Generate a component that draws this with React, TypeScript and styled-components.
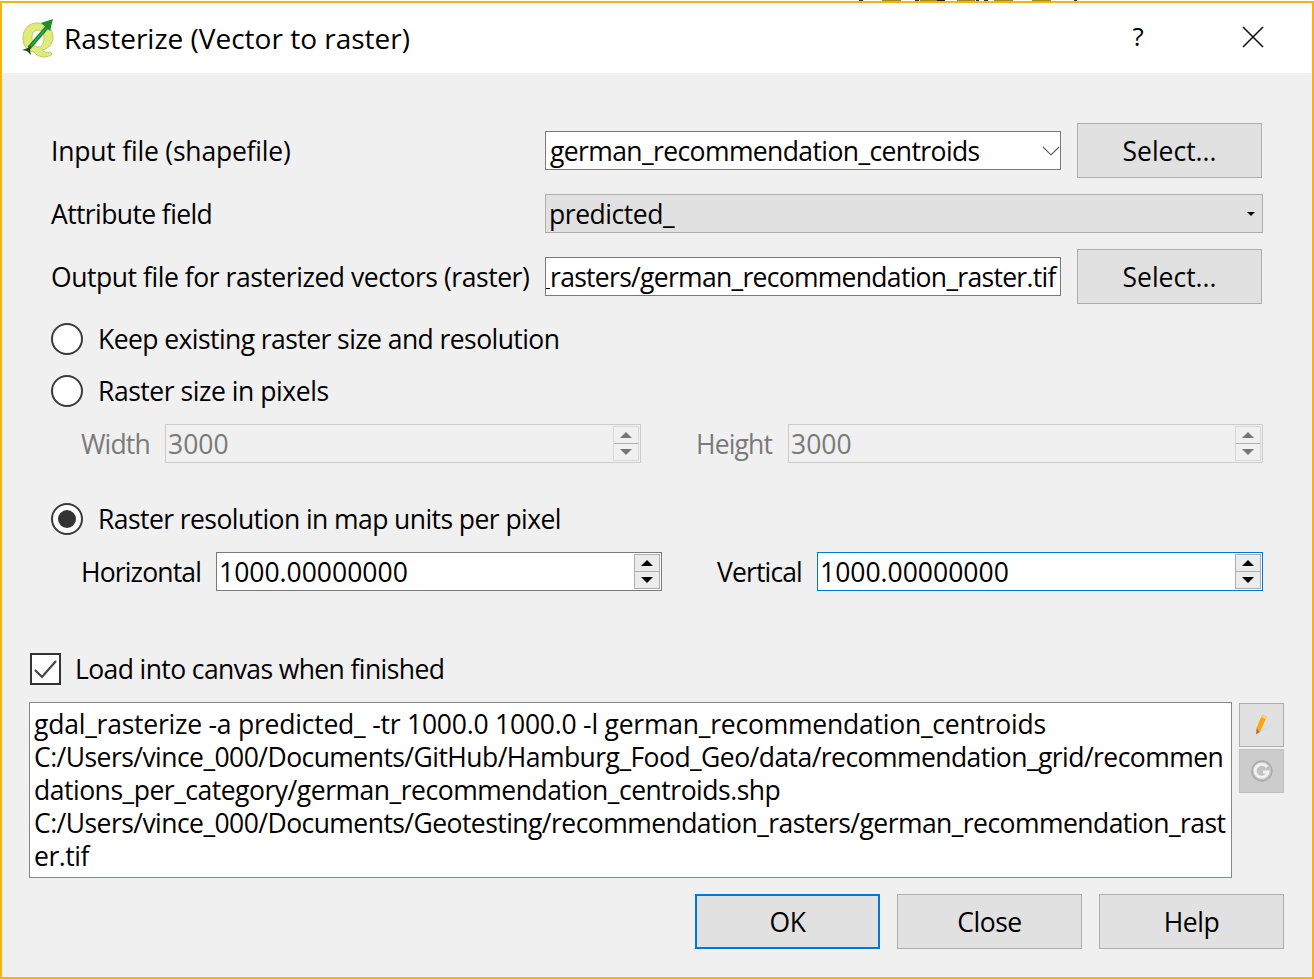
import React from 'react';
import styled, { createGlobalStyle, css } from 'styled-components';

const GlobalStyle = createGlobalStyle`
  html, body {
    margin: 0;
    padding: 0;
    background: #fff;
  }
  body {
    font-family: "Open Sans", "Liberation Sans", sans-serif;
    font-size: 26.5px;
    letter-spacing: -0.45px;
    color: #000;
  }
`;

const QgisIcon = () => (
  <svg width="34" height="40" viewBox="0 0 34 40" fill="none">
    <path
      fillRule="evenodd"
      d="M15 5C7 5 1 11 1 20c0 8 4 13 11 14 2 3 6 5 10 5 3 0 6-1 8-3l-2-2c-3 1-6 0-8-2 7-1 11-7 11-13C31 11 24 5 15 5Zm1 7c4 0 6 3 6 8 0 5-2 9-6 9-4 0-6-4-6-9 0-5 2-8 6-8Z"
      fill="#e0ec78"
      stroke="#bcc868"
      strokeWidth="1"
    />
    <path d="M7 30 26 8" stroke="#17792a" strokeWidth="4" />
    <path d="M7 30 26 8" stroke="#35b03a" strokeWidth="1.6" />
    <path d="M31 1 19 5l9 8Z" fill="#1d8f2c" />
    <path d="M0 32l6-2 3-3-1 5 1 5-4-4Z" fill="#27402a" />
  </svg>
);

const CloseIcon = () => (
  <svg width="22" height="22" viewBox="0 0 22 22">
    <path d="M1 1 21 21M21 1 1 21" stroke="#111" strokeWidth="1.6" />
  </svg>
);

const ChevronIcon = () => (
  <svg width="18" height="10" viewBox="0 0 18 10" fill="none">
    <path d="M1 1l8 8 8-8" stroke="#666" strokeWidth="1.2" />
  </svg>
);

const PencilIcon = () => (
  <svg width="24" height="24" viewBox="0 0 24 24" fill="none">
    <path d="M9 20 23 13 21 10 11 17Z" fill="#dcdce4" />
    <path d="M6.500 15 12 2l5 1.500L10 19Z" fill="#f7a80f" />
    <path d="M12 2l5 1.500-1 2.500-5-2Z" fill="#f9d27a" />
    <path d="M6.500 15 10 19l-4 2.500Z" fill="#b5714a" />
  </svg>
);

const RefreshIcon = () => (
  <svg width="22" height="22" viewBox="0 0 22 22" fill="none">
    <circle cx="11" cy="11" r="10" fill="#c2c2c2" stroke="#ababab" strokeWidth="1.4" />
    <path d="M16 7a6.5 6.5 0 1 0 1 5h-5" stroke="#f2f2f2" strokeWidth="3" />
  </svg>
);

// bits of the window behind, peeking out above the frame
const behindBits: [number, number, string][] = [
  [859, 4, '#333'], [882, 19, '#a08a20'], [915, 4, '#333'], [920, 17, '#a08a20'],
  [937, 8, '#222'], [957, 18, '#a08a20'], [976, 3, '#333'], [984, 4, '#333'],
  [994, 19, '#a08a20'], [1032, 19, '#a08a20'], [1074, 3, '#333'],
];

const BehindStrip = styled.svg`
  display: block;
  flex: none;
`;

const Page = styled.div`
  width: 1314px;
  height: 979px;
  overflow: hidden;
`;

const Window = styled.div`
  height: 978px;
  box-sizing: border-box;
  border: 2px solid #f4b40c;
  background: #f0f0f0;
  display: flex;
  flex-direction: column;
`;

const TitleBar = styled.div`
  height: 70px;
  flex: none;
  background: #fff;
  display: flex;
  align-items: center;
  padding-left: 20px;
`;

const Title = styled.div`
  font-size: 28px;
  letter-spacing: 0;
  margin-left: 8px;
  flex: 1;
  padding-bottom: 1px;
`;

const HelpMark = styled.div`
  font-size: 26px;
  width: 20px;
  text-align: center;
  margin-right: 94px;
  padding-bottom: 4px;
`;

const CloseBox = styled.div`
  display: flex;
  margin-right: 48px;
  padding-bottom: 2px;
`;

const Body = styled.div`
  flex: 1;
  display: flex;
  flex-direction: column;
  padding: 50px 28px 0 27px;
`;

const Form = styled.div`
  display: flex;
  flex-direction: column;
  padding-left: 22px;
  padding-right: 22px;
`;

const FormRow = styled.div<{ $top?: number }>`
  display: grid;
  grid-template-columns: 494px 516px 185px;
  align-items: center;
  margin-top: ${p => p.$top ?? 0}px;
`;

const WideRow = styled(FormRow)`
  grid-template-columns: 494px 718px;
`;

const FieldLabel = styled.div<{ $spacing?: number }>`
  white-space: nowrap;
  letter-spacing: ${p => p.$spacing ?? -0.45}px;
`;

const boxBase = css`
  height: 39px;
  box-sizing: border-box;
  display: flex;
  align-items: center;
  white-space: nowrap;
  overflow: hidden;
`;

const Combo = styled.div`
  ${boxBase}
  background: #fff;
  border: 1px solid #7a7a7a;
  padding: 0 0 0 4px;
  justify-content: space-between;
  letter-spacing: -0.6px;
`;

const DisabledCombo = styled.div`
  ${boxBase}
  background: #e1e1e1;
  border: 1px solid #adadad;
  padding: 0 7px 0 3px;
  justify-content: space-between;
`;

const TinyArrow = styled.span`
  width: 0;
  height: 0;
  border-left: 4px solid transparent;
  border-right: 4px solid transparent;
  border-top: 4px solid #000;
`;

const TextField = styled.div`
  ${boxBase}
  background: #fff;
  border: 1px solid #7a7a7a;
  letter-spacing: -0.7px;
`;

const ClippedUnderscore = styled.span`
  width: 4px;
  height: 1px;
  flex: none;
  align-self: flex-end;
  margin-bottom: 6px;
  background: #000;
`;

const PushButton = styled.button<{ $focused?: boolean }>`
  font: inherit;
  letter-spacing: inherit;
  color: #000;
  height: 55px;
  width: 185px;
  padding: 0;
  background: #e1e1e1;
  border: ${p => (p.$focused ? '2px solid #0078d7' : '1px solid #adadad')};
  box-sizing: border-box;
`;

const SelectButton = styled(PushButton)`
  margin-left: 16px;
  letter-spacing: 0;
`;

const RadioRow = styled.div<{ $top: number }>`
  display: flex;
  align-items: center;
  gap: 15px;
  height: 32px;
  margin-top: ${p => p.$top}px;
`;

const OptionText = styled.span<{ $spacing?: number }>`
  white-space: nowrap;
  letter-spacing: ${p => p.$spacing ?? -0.57}px;
`;

const RadioMark = styled.span<{ $on?: boolean }>`
  width: 32px;
  height: 32px;
  box-sizing: border-box;
  border-radius: 50%;
  border: 2px solid #3a3a3a;
  background: #fff;
  display: flex;
  align-items: center;
  justify-content: center;

  &::after {
    content: '';
    display: ${p => (p.$on ? 'block' : 'none')};
    width: 18px;
    height: 18px;
    border-radius: 50%;
    background: #333;
  }
`;

const SpinRow = styled.div<{ $left: number; $gap: number }>`
  display: grid;
  grid-template-columns: ${p => p.$left}px 1fr;
  column-gap: ${p => p.$gap}px;
  margin-top: 17px;
  padding-left: 30px;
  margin-right: -1px;
`;

const SpinGroup = styled.div<{ $disabled?: boolean }>`
  display: flex;
  align-items: center;
  color: ${p => (p.$disabled ? '#7a7a7a' : '#000')};
`;

const SpinLabel = styled.div<{ $width: number }>`
  width: ${p => p.$width}px;
  flex: none;
  white-space: nowrap;
  letter-spacing: -0.85px;
`;

const SpinBox = styled.div<{ $disabled?: boolean; $focused?: boolean }>`
  ${boxBase}
  flex: 1;
  padding: 0 1px 0 2px;
  justify-content: space-between;
  letter-spacing: 0;
  background: ${p => (p.$disabled ? '#f0f0f0' : '#fff')};
  border: 1px solid ${p => (p.$disabled ? '#cccccc' : p.$focused ? '#0078d7' : '#7a7a7a')};
`;

const Stepper = styled.div<{ $disabled?: boolean }>`
  width: 26px;
  height: 35px;
  flex: none;
  display: flex;
  flex-direction: column;
  box-sizing: border-box;
  border: 1px solid ${p => (p.$disabled ? '#d8d8d8' : '#adadad')};
  background: ${p => (p.$disabled ? '#f0f0f0' : '#ececec')};
`;

const StepCell = styled.div<{ $disabled?: boolean }>`
  flex: 1;
  display: flex;
  align-items: center;
  justify-content: center;

  & + & {
    border-top: 1px solid ${p => (p.$disabled ? '#d8d8d8' : '#adadad')};
  }
`;

const Triangle = styled.span<{ $down?: boolean; $disabled?: boolean }>`
  width: 0;
  height: 0;
  border-left: 6px solid transparent;
  border-right: 6px solid transparent;
  ${p => {
    const color = p.$disabled ? '#757575' : '#000';
    return p.$down ? `border-top: 6px solid ${color};` : `border-bottom: 6px solid ${color};`;
  }}
`;

const CheckRow = styled.div`
  display: flex;
  align-items: center;
  gap: 14px;
  height: 32px;
  margin-top: 62px;
  margin-left: 1px;
`;

const CheckMark = styled.span`
  width: 31px;
  height: 32px;
  box-sizing: border-box;
  border: 2px solid #333;
  background: #fff;
  display: flex;
  align-items: center;
  justify-content: center;
`;

const CommandRow = styled.div`
  display: flex;
  gap: 7px;
  margin-top: 17px;
`;

const CommandBox = styled.div`
  width: 1203px;
  height: 176px;
  box-sizing: border-box;
  flex: none;
  background: #fff;
  border: 1px solid #828790;
  padding: 5px 4px;
  overflow: hidden;
`;

const CommandLine = styled.div<{ $spacing: number }>`
  height: 33px;
  line-height: 33px;
  white-space: nowrap;
  letter-spacing: ${p => p.$spacing}px;
`;

const SideButtons = styled.div`
  display: flex;
  flex-direction: column;
  gap: 2px;
  margin-top: 1px;
`;

const ToolButton = styled.div<{ $disabled?: boolean }>`
  width: 45px;
  height: 44px;
  box-sizing: border-box;
  background: ${p => (p.$disabled ? '#cccccc' : '#e1e1e1')};
  border: 1px solid ${p => (p.$disabled ? '#bfbfbf' : '#adadad')};
  display: flex;
  align-items: center;
  justify-content: center;
`;

const ButtonBar = styled.div`
  display: flex;
  justify-content: flex-end;
  gap: 17px;
  margin-top: 16px;
`;

const Spinner = ({ value, disabled, focused }: { value: string; disabled?: boolean; focused?: boolean }) => (
  <SpinBox $disabled={disabled} $focused={focused}>
    {value}
    <Stepper $disabled={disabled}>
      <StepCell $disabled={disabled}><Triangle $disabled={disabled} /></StepCell>
      <StepCell $disabled={disabled}><Triangle $down $disabled={disabled} /></StepCell>
    </Stepper>
  </SpinBox>
);

const commandLines = [
  { text: 'gdal_rasterize -a predicted_ -tr 1000.0 1000.0 -l german_recommendation_centroids', spacing: -0.22 },
  { text: 'C:/Users/vince_000/Documents/GitHub/Hamburg_Food_Geo/data/recommendation_grid/recommen', spacing: -0.55 },
  { text: 'dations_per_category/german_recommendation_centroids.shp', spacing: -0.48 },
  { text: 'C:/Users/vince_000/Documents/Geotesting/recommendation_rasters/german_recommendation_rast', spacing: -0.55 },
  { text: 'er.tif', spacing: -0.45 },
];

export default function App() {
  return (
    <Page>
      <GlobalStyle />
      <BehindStrip width="1314" height="1">
        {behindBits.map(([x, w, fill]) => (
          <rect key={x} x={x} y="0" width={w} height="1" fill={fill} />
        ))}
      </BehindStrip>
      <Window>
        <TitleBar>
          <QgisIcon />
          <Title>Rasterize (Vector to raster)</Title>
          <HelpMark>?</HelpMark>
          <CloseBox><CloseIcon /></CloseBox>
        </TitleBar>

        <Body>
          <Form>
            <FormRow>
              <FieldLabel $spacing={-0.2}>Input file (shapefile)</FieldLabel>
              <Combo>
                german_recommendation_centroids
                <ChevronIcon />
              </Combo>
              <SelectButton>Select...</SelectButton>
            </FormRow>
            <WideRow $top={16}>
              <FieldLabel $spacing={-0.6}>Attribute field</FieldLabel>
              <DisabledCombo>
                predicted_
                <TinyArrow />
              </DisabledCombo>
            </WideRow>
            <FormRow $top={16}>
              <FieldLabel>Output file for rasterized vectors (raster)</FieldLabel>
              <TextField>
                <ClippedUnderscore />
                rasters/german_recommendation_raster.tif
              </TextField>
              <SelectButton>Select...</SelectButton>
            </FormRow>

            <RadioRow $top={19}>
              <RadioMark />
              <OptionText>Keep existing raster size and resolution</OptionText>
            </RadioRow>
            <RadioRow $top={20}>
              <RadioMark />
              <OptionText $spacing={-0.45}>Raster size in pixels</OptionText>
            </RadioRow>
            <SpinRow $left={560} $gap={55}>
              <SpinGroup $disabled>
                <SpinLabel $width={84}>Width</SpinLabel>
                <Spinner value="3000" disabled />
              </SpinGroup>
              <SpinGroup $disabled>
                <SpinLabel $width={92}>Height</SpinLabel>
                <Spinner value="3000" disabled />
              </SpinGroup>
            </SpinRow>
            <RadioRow $top={40}>
              <RadioMark $on />
              <OptionText>Raster resolution in map units per pixel</OptionText>
            </RadioRow>
            <SpinRow $left={581} $gap={55}>
              <SpinGroup>
                <SpinLabel $width={135}>Horizontal</SpinLabel>
                <Spinner value="1000.00000000" />
              </SpinGroup>
              <SpinGroup>
                <SpinLabel $width={100}>Vertical</SpinLabel>
                <Spinner value="1000.00000000" focused />
              </SpinGroup>
            </SpinRow>
          </Form>

          <CheckRow>
            <CheckMark>
              <svg width="23" height="20" viewBox="0 0 23 20" fill="none">
                <path d="M1 11l7 7L22 2" stroke="#444" strokeWidth="2.2" />
              </svg>
            </CheckMark>
            <OptionText $spacing={-0.6}>Load into canvas when finished</OptionText>
          </CheckRow>

          <CommandRow>
            <CommandBox>
              {commandLines.map(line => (
                <CommandLine key={line.text} $spacing={line.spacing}>{line.text}</CommandLine>
              ))}
            </CommandBox>
            <SideButtons>
              <ToolButton><PencilIcon /></ToolButton>
              <ToolButton $disabled><RefreshIcon /></ToolButton>
            </SideButtons>
          </CommandRow>

          <ButtonBar>
            <PushButton $focused>OK</PushButton>
            <PushButton>Close</PushButton>
            <PushButton>Help</PushButton>
          </ButtonBar>
        </Body>
      </Window>
    </Page>
  );
}
